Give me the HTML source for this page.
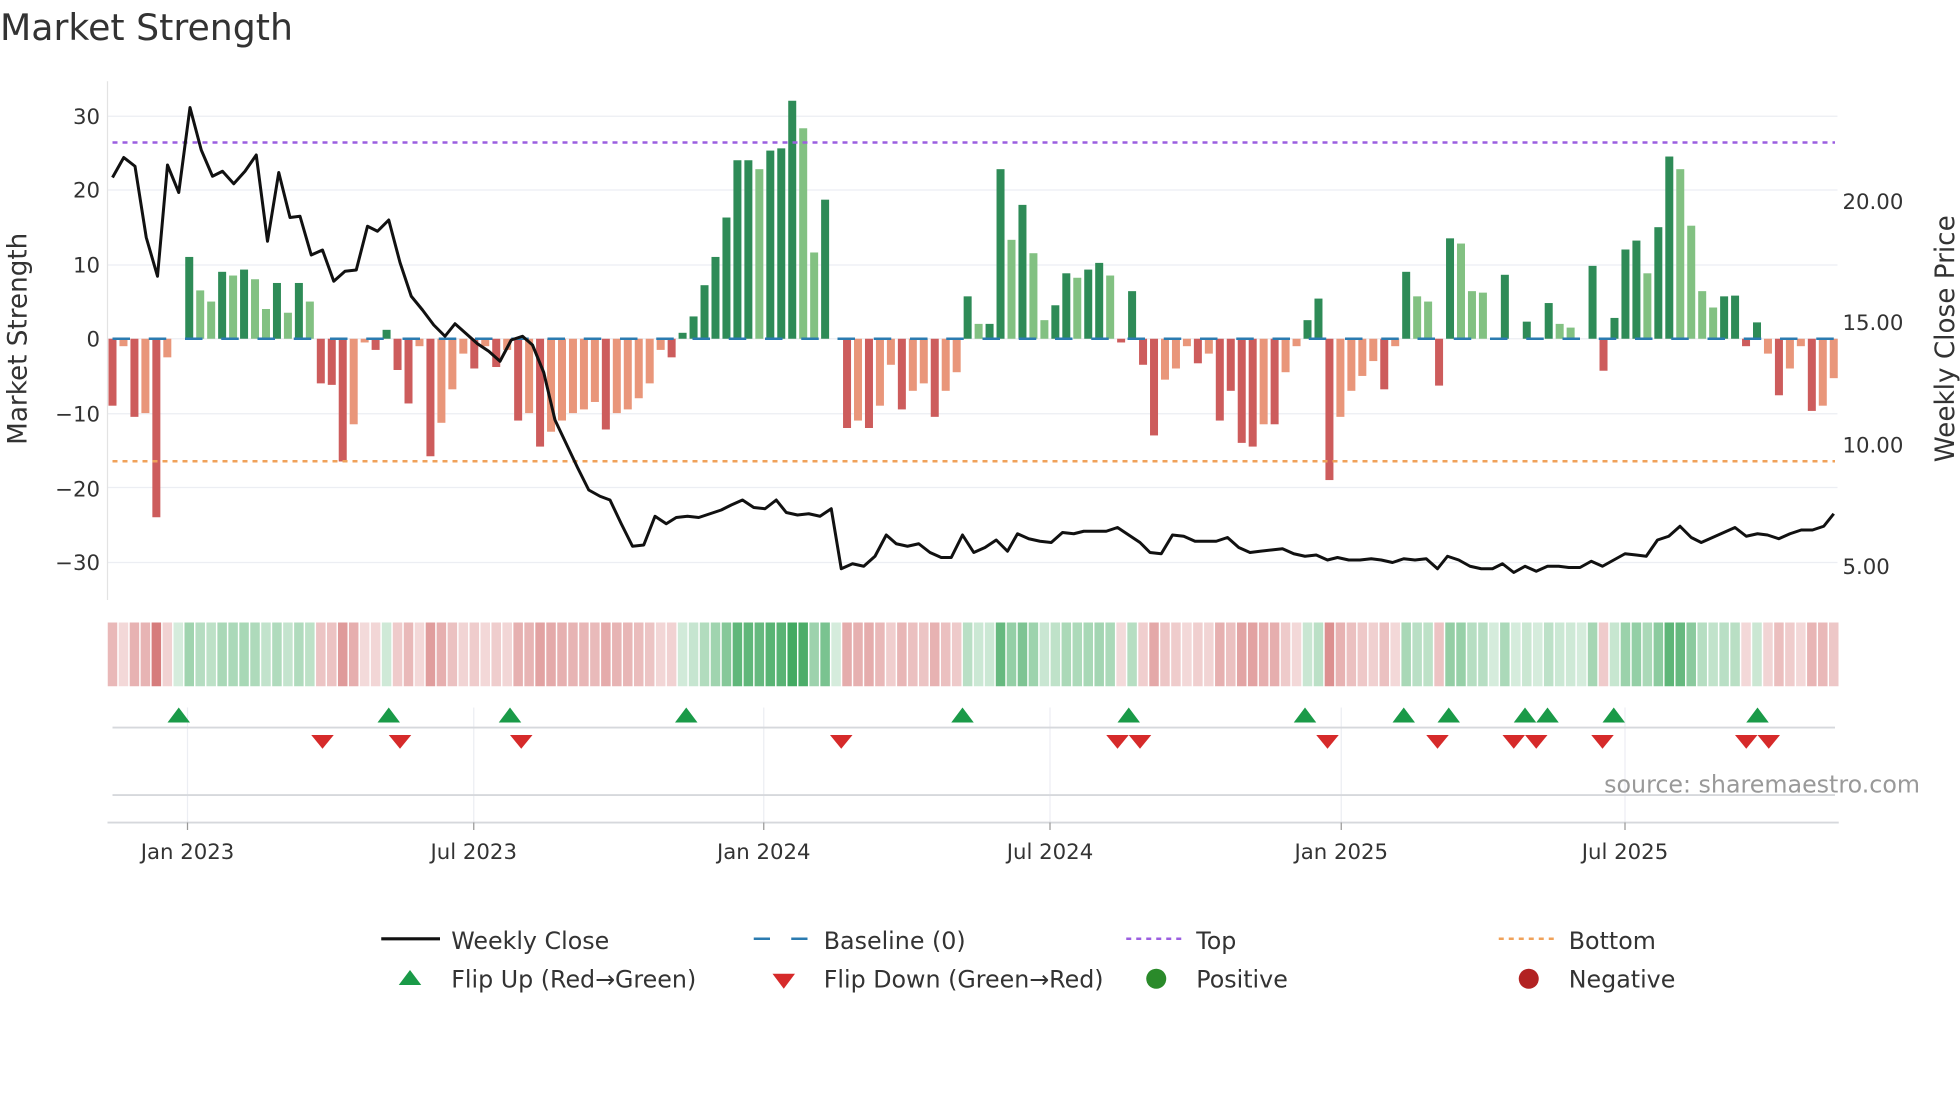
<!DOCTYPE html>
<html><head><meta charset="utf-8"><style>
html,body{margin:0;padding:0;background:#fff;width:1960px;height:1102px;overflow:hidden}
svg{display:block}
text{font-family:"DejaVu Sans","Liberation Sans",sans-serif;fill:#333}
</style></head><body>
<svg id="s" width="1960" height="1102" viewBox="0 0 1568 881.6" xmlns="http://www.w3.org/2000/svg">
<text x="0" y="32" font-size="29" fill="#333">Market Strength</text>
<g id="grid" stroke="#eceef3" stroke-width="1"></g>
<line x1="86" y1="65" x2="86" y2="480" stroke="#e3e3e3"/>
<g font-size="17" text-anchor="end">
<text x="80" y="99">30</text><text x="80" y="158">20</text><text x="80" y="218">10</text><text x="80" y="277">0</text><text x="80" y="337">−10</text><text x="80" y="397">−20</text><text x="80" y="456">−30</text>
</g>
<g font-size="17">
<text x="1474" y="167">20.00</text><text x="1474" y="264">15.00</text><text x="1474" y="362">10.00</text><text x="1474" y="459">5.00</text>
</g>
<text transform="translate(21,271) rotate(-90)" font-size="21" text-anchor="middle">Market Strength</text>
<text transform="translate(1563,271) rotate(-90)" font-size="21" text-anchor="middle">Weekly Close Price</text>
<g id="bars"></g>
<line x1="90" y1="271" x2="1468" y2="271" stroke="#2b7bb0" stroke-width="2" stroke-dasharray="14,15"/>
<line x1="90" y1="114" x2="1468" y2="114" stroke="#9b5fe0" stroke-width="2" stroke-dasharray="4,4"/>
<line x1="90" y1="369" x2="1468" y2="369" stroke="#f0a25a" stroke-width="2" stroke-dasharray="4,4"/>
<polyline id="price" fill="none" stroke="#111" stroke-width="2.4" stroke-linejoin="round"/>
<g id="heat"></g>
<g stroke="#eceef3"><line x1="150" y1="566" x2="150" y2="658"/><line x1="379" y1="566" x2="379" y2="658"/><line x1="611" y1="566" x2="611" y2="658"/><line x1="840" y1="566" x2="840" y2="658"/><line x1="1073" y1="566" x2="1073" y2="658"/><line x1="1300" y1="566" x2="1300" y2="658"/></g>
<line x1="90" y1="582" x2="1468" y2="582" stroke="#d6d8dc" stroke-width="1.5"/>
<line x1="90" y1="636" x2="1468" y2="636" stroke="#d6d8dc" stroke-width="1.5"/>
<line x1="86" y1="658" x2="1471" y2="658" stroke="#d6d8dc" stroke-width="1.5"/>
<g id="flips"></g>
<text x="1536" y="634" font-size="19" text-anchor="end" fill="#999" style="fill:#999">source: sharemaestro.com</text>
<g stroke="#999"><line x1="150" y1="658" x2="150" y2="664"/><line x1="379" y1="658" x2="379" y2="664"/><line x1="611" y1="658" x2="611" y2="664"/><line x1="840" y1="658" x2="840" y2="664"/><line x1="1073" y1="658" x2="1073" y2="664"/><line x1="1300" y1="658" x2="1300" y2="664"/></g>
<g font-size="17" text-anchor="middle">
<text x="150" y="687">Jan 2023</text><text x="379" y="687">Jul 2023</text><text x="611" y="687">Jan 2024</text><text x="840" y="687">Jul 2024</text><text x="1073" y="687">Jan 2025</text><text x="1300" y="687">Jul 2025</text>
</g>
<g font-size="19">
<line x1="305" y1="751" x2="352" y2="751" stroke="#111" stroke-width="2.5"/><text x="361" y="759">Weekly Close</text>
<line x1="603" y1="751" x2="647" y2="751" stroke="#2b7bb0" stroke-width="2" stroke-dasharray="13,17"/><text x="659" y="759">Baseline (0)</text>
<line x1="901" y1="751" x2="945" y2="751" stroke="#9b5fe0" stroke-width="2" stroke-dasharray="4,4"/><text x="957" y="759">Top</text>
<line x1="1199" y1="751" x2="1243" y2="751" stroke="#f0a25a" stroke-width="2" stroke-dasharray="4,4"/><text x="1255" y="759">Bottom</text>
<polygon points="319,788 328,776 337,788" fill="#1a9a48"/><text x="361" y="790">Flip Up (Red→Green)</text>
<polygon points="618,779 627,791 636,779" fill="#d62a2a"/><text x="659" y="790">Flip Down (Green→Red)</text>
<circle cx="925" cy="783" r="8" fill="#2a8a2a"/><text x="957" y="790">Positive</text>
<circle cx="1223" cy="783" r="8" fill="#b22222"/><text x="1255" y="790">Negative</text>
</g>
</svg>
<script>
var NS="http://www.w3.org/2000/svg";
function el(t,a,p){var e=document.createElementNS(NS,t);for(var k in a)e.setAttribute(k,a[k]);document.getElementById(p).appendChild(e);return e;}
[93,152,212,271,331,390,450].forEach(function(y){el("line",{x1:86,x2:1470,y1:y,y2:y},"grid");});
var B="-9R -1O -10.5R -10O -24R -2.5O 0D 11D 6.5L 5L 9D 8.5L 9.3D 8L 4L 7.5D 3.5L 7.5D 5L -6R -6.2R -16.5R -11.5O -0.5O -1.5R 1.2D -4.2R -8.7R -1O -15.8R -11.3O -6.8O -2O -4R -1O -3.8R -1.5O -11R -10O -14.5R -12.5O -11O -10O -9.5O -8.5O -12.2R -10O -9.5O -8O -6O -1.5O -2.5R 0.8D 3D 7.2D 11D 16.3D 24D 24D 22.8L 25.3D 25.6D 32D 28.3L 11.6L 18.7D 0O -12R -11O -12R -9O -3.5O -9.5R -7O -6O -10.5R -7O -4.5O 5.7D 2L 2D 22.8D 13.3L 18D 11.5L 2.5L 4.5D 8.8D 8.2L 9.3D 10.2D 8.5L -0.5R 6.4D -3.5R -13R -5.5O -4O -1O -3.3R -2O -11R -7R -14R -14.5R -11.5O -11.5R -4.5O -1O 2.5D 5.4D -19R -10.5O -7O -5O -3O -6.8R -1O 9D 5.7L 5L -6.3R 13.5D 12.8L 6.4L 6.2L 0O 8.6D 0O 2.3D 0O 4.8D 2L 1.5L 0O 9.8D -4.3R 2.8D 12D 13.2D 8.8L 15D 24.5D 22.8L 15.2L 6.4L 4.2L 5.7D 5.8D -1R 2.2D -2O -7.6R -4O -1O -9.7R -9O -5.3O".split(" ");
var C={D:"#2e8b57",L:"#82c182",R:"#cd5c5c",O:"#e9967a"};
var n=B.length,step=(1467-90)/(n-1);
B.forEach(function(s,i){var v=parseFloat(s),c=s.slice(-1),x=90+step*i;var y0=271,y1=271-v*5.95;
 if(v!=0)el("rect",{x:x-3.2,y:Math.min(y0,y1),width:6.4,height:Math.abs(y1-y0),fill:C[c]},"bars");
 var m=Math.min(Math.abs(v)/30,1),col;
 if(v>=0){var a=0.2+0.7*m;col="rgba(46,160,80,"+a+")";}else{var a=0.2+0.55*Math.min(Math.abs(v)/24,1);col="rgba(200,80,80,"+a+")";}
 el("rect",{x:x-3.8,y:498,width:7.6,height:51,fill:col},"heat");
});
var P="90,142 99,126 108,133 117,190 126,221 134,132 143,154 152,86 161,120 170,141 178,137 187,147 196,137 205,124 214,193 223,138 232,174 240,173 249,204 258,200 267,225 276,217 285,216 294,181 302,185 311,176 320,210 329,237 338,248 347,260 356,269 364,259 373,267 382,275 391,281 400,289 409,272 418,269 426,276 435,298 444,336 453,355 462,374 471,392 480,397 488,400 497,419 506,437 515,436 524,413 533,419 541,414 550,413 559,414 568,411 577,408 585,404 594,400 603,406 612,407 621,400 629,410 638,412 647,411 656,413 665,407 673,455 682,451 691,453 700,445 709,428 717,435 726,437 735,435 744,442 753,446 761,446 770,428 779,442 788,438 797,432 806,441 814,427 823,431 832,433 841,434 850,426 859,427 867,425 876,425 885,425 894,422 903,428 912,434 920,442 929,443 938,428 947,429 956,433 964,433 973,433 982,430 991,438 1000,442 1008,441 1017,440 1026,439 1035,443 1044,445 1053,444 1062,448 1070,446 1079,448 1088,448 1097,447 1105,448 1114,450 1123,447 1132,448 1141,447 1150,455 1158,445 1167,448 1176,453 1185,455 1194,455 1202,451 1211,458 1220,453 1229,457 1238,453 1247,453 1255,454 1264,454 1273,449 1282,453 1291,448 1300,443 1309,444 1317,445 1326,432 1335,429 1344,421 1353,430 1361,434 1370,430 1379,426 1388,422 1397,429 1406,427 1414,428 1423,431 1432,427 1441,424 1450,424 1459,421 1467,411";
document.getElementById("price").setAttribute("points",P);
[143,311,408,549,770,903,1044,1123,1159,1220,1238,1291,1406].forEach(function(x){el("polygon",{points:(x-9)+",578 "+x+",566 "+(x+9)+",578",fill:"#1a9a48"},"flips");});
[258,320,417,673,894,912,1062,1150,1211,1229,1282,1397,1415].forEach(function(x){el("polygon",{points:(x-9)+",588 "+x+",599 "+(x+9)+",588",fill:"#d62a2a"},"flips");});
</script>
</body></html>
